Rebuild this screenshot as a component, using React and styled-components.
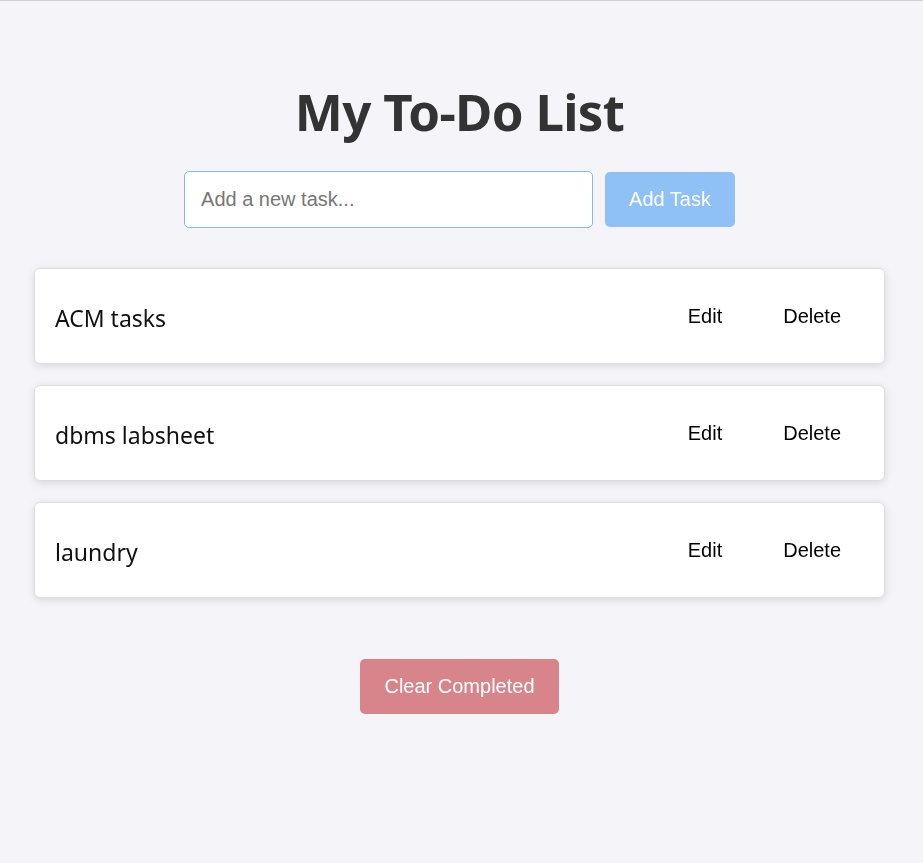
import React from "react";
import styled, { createGlobalStyle } from "styled-components";

const Global = createGlobalStyle`
  html, body { margin: 0; padding: 0; }
  body {
    background: #f4f4f9;
    border-top: 1px solid #cfcfd6;
    font-family: "Liberation Sans", Arial, sans-serif;
    min-height: 862px;
  }
`;

const Page = styled.div`
  display: flex;
  flex-direction: column;
  align-items: center;
  padding: 80px 36px 40px 32px;
`;

const Title = styled.h1`
  margin: 0 0 30px 0;
  font-family: "Noto Sans", "Open Sans", sans-serif;
  font-weight: 700;
  font-size: 51px;
  line-height: 60px;
  color: #333;
  letter-spacing: -0.7px;
`;

const Form = styled.div`
  display: flex;
  align-items: center;
  gap: 12px;
  margin-bottom: 40px;
`;

const Input = styled.input`
  width: 409px;
  box-sizing: border-box;
  padding: 16px;
  font-family: "Liberation Sans", Arial, sans-serif;
  font-size: 20px;
  line-height: 23px;
  border: 1px solid #86b8f0;
  border-radius: 5px;
  background: #fff;
  outline: none;
  &::placeholder { color: #767676; }
`;

const Button = styled.button`
  border: none;
  border-radius: 5px;
  padding: 16px ${(p) => p.$px || 24}px;
  font-family: "Liberation Sans", Arial, sans-serif;
  font-size: 20px;
  line-height: 23px;
  color: ${(p) => p.$fg || "#fff"};
  background: ${(p) => p.$bg || "transparent"};
  cursor: pointer;
`;

const List = styled.ul`
  list-style: none;
  margin: 0;
  padding: 0;
  width: 851px;
  display: flex;
  flex-direction: column;
  gap: 21px;
`;

const Card = styled.li`
  display: flex;
  align-items: center;
  justify-content: space-between;
  background: #fff;
  border: 1px solid #ddd;
  border-radius: 6px;
  box-shadow: 0 2px 8px rgba(0, 0, 0, 0.12);
  padding: 20px;
  height: 96px;
  box-sizing: border-box;
`;

const TaskText = styled.span`
  font-family: "Noto Sans", "Open Sans", sans-serif;
  font-size: 23px;
  color: #111;
  margin-top: 4px;
`;

const Actions = styled.div`
  display: flex;
  align-items: center;
  gap: 13px;
  margin-top: 1px;
  margin-right: -1px;
`;

const Footer = styled.div`
  margin-top: 61px;
  display: flex;
  justify-content: center;
`;

const tasks = ["ACM tasks", "dbms labsheet", "laundry"];

export default function App() {
  return (
    <>
      <Global />
      <Page>
        <Title>My To-Do List</Title>
        <Form>
          <Input placeholder="Add a new task..." autoFocus />
          <Button $bg="#8fc0f6" $px={24}>Add Task</Button>
        </Form>
        <List>
          {tasks.map((t) => (
            <Card key={t}>
              <TaskText>{t}</TaskText>
              <Actions>
                <Button $fg="#000">Edit</Button>
                <Button $fg="#000">Delete</Button>
              </Actions>
            </Card>
          ))}
        </List>
        <Footer>
          <Button $bg="#d7858b" $px={24}>Clear Completed</Button>
        </Footer>
      </Page>
    </>
  );
}
